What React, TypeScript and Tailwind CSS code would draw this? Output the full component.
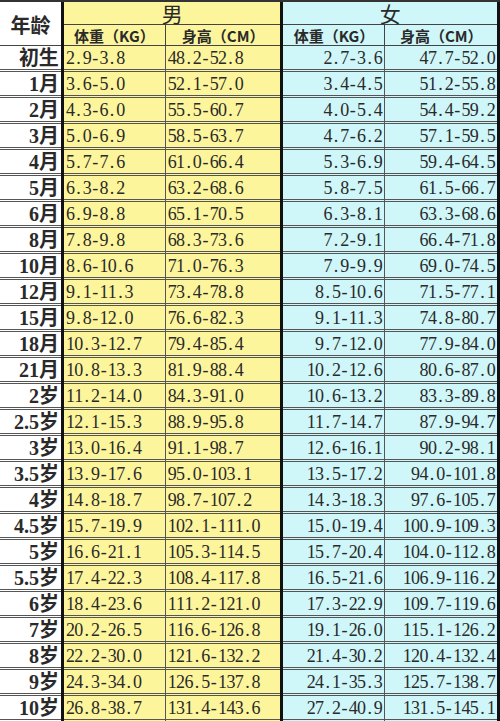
import React from "react";

const ROWS: [string, string, string, string, string][] = [
  ["初生", "2.9-3.8", "48.2-52.8", "2.7-3.6", "47.7-52.0"],
  ["1月", "3.6-5.0", "52.1-57.0", "3.4-4.5", "51.2-55.8"],
  ["2月", "4.3-6.0", "55.5-60.7", "4.0-5.4", "54.4-59.2"],
  ["3月", "5.0-6.9", "58.5-63.7", "4.7-6.2", "57.1-59.5"],
  ["4月", "5.7-7.6", "61.0-66.4", "5.3-6.9", "59.4-64.5"],
  ["5月", "6.3-8.2", "63.2-68.6", "5.8-7.5", "61.5-66.7"],
  ["6月", "6.9-8.8", "65.1-70.5", "6.3-8.1", "63.3-68.6"],
  ["8月", "7.8-9.8", "68.3-73.6", "7.2-9.1", "66.4-71.8"],
  ["10月", "8.6-10.6", "71.0-76.3", "7.9-9.9", "69.0-74.5"],
  ["12月", "9.1-11.3", "73.4-78.8", "8.5-10.6", "71.5-77.1"],
  ["15月", "9.8-12.0", "76.6-82.3", "9.1-11.3", "74.8-80.7"],
  ["18月", "10.3-12.7", "79.4-85.4", "9.7-12.0", "77.9-84.0"],
  ["21月", "10.8-13.3", "81.9-88.4", "10.2-12.6", "80.6-87.0"],
  ["2岁", "11.2-14.0", "84.3-91.0", "10.6-13.2", "83.3-89.8"],
  ["2.5岁", "12.1-15.3", "88.9-95.8", "11.7-14.7", "87.9-94.7"],
  ["3岁", "13.0-16.4", "91.1-98.7", "12.6-16.1", "90.2-98.1"],
  ["3.5岁", "13.9-17.6", "95.0-103.1", "13.5-17.2", "94.0-101.8"],
  ["4岁", "14.8-18.7", "98.7-107.2", "14.3-18.3", "97.6-105.7"],
  ["4.5岁", "15.7-19.9", "102.1-111.0", "15.0-19.4", "100.9-109.3"],
  ["5岁", "16.6-21.1", "105.3-114.5", "15.7-20.4", "104.0-112.8"],
  ["5.5岁", "17.4-22.3", "108.4-117.8", "16.5-21.6", "106.9-116.2"],
  ["6岁", "18.4-23.6", "111.2-121.0", "17.3-22.9", "109.7-119.6"],
  ["7岁", "20.2-26.5", "116.6-126.8", "19.1-26.0", "115.1-126.2"],
  ["8岁", "22.2-30.0", "121.6-132.2", "21.4-30.2", "120.4-132.4"],
  ["9岁", "24.3-34.0", "126.5-137.8", "24.1-35.3", "125.7-138.7"],
  ["10岁", "26.8-38.7", "131.4-143.6", "27.2-40.9", "131.5-145.1"],
];

// SimSun-like half-width cells: every character takes the same width
function Mono({ text }: { text: string }) {
  return (
    <span className="inline-flex">
      {text.split("").map((ch, i) => (
        <span key={i} className="inline-block w-[8.4px] text-center">
          {ch}
        </span>
      ))}
    </span>
  );
}

const serif = "font-['Liberation_Serif','Noto_Sans_CJK_SC',serif]";
const cjk = "font-['Noto_Sans_CJK_SC','Liberation_Sans',sans-serif]";

function SubHeader() {
  return (
    <div className="flex flex-1 border-b border-[#444]">
      <div className={`w-[102px] flex items-center justify-center border-r border-[#444] text-[15px] font-bold leading-none ${cjk}`}>
        体重（KG）
      </div>
      <div className={`flex-1 flex items-center justify-center text-[15px] font-bold leading-none ${cjk}`}>
        身高（CM）
      </div>
    </div>
  );
}

export default function App() {
  return (
    <div className="w-[500px] h-[721px] overflow-hidden bg-white text-[#2a2a2a]">
      {/* Header */}
      <div className="flex border-t-2 border-[#333] h-[46px]">
        <div
          className={`w-[61px] flex items-center justify-center pt-[2px] border-b border-[#444] text-[20px] font-bold leading-none ${cjk}`}
        >
          年龄
        </div>
        <div className="w-[3px] bg-[#111]" />
        <div className="w-[217px] flex flex-col bg-[#fdf59c]">
          <div className={`h-[23px] flex items-center justify-center border-b border-[#444] text-[21px] leading-[21px] ${cjk}`}>
            男
          </div>
          <SubHeader />
        </div>
        <div className="w-[3px] bg-[#111]" />
        <div className="w-[214px] flex flex-col bg-[#cff6f8]">
          <div className={`h-[23px] flex items-center justify-center border-b border-[#444] text-[21px] leading-[21px] ${cjk}`}>
            女
          </div>
          <SubHeader />
        </div>
        <div className="w-[3px] bg-[#111]" />
      </div>

      {/* Data rows */}
      {ROWS.map(([age, mw, mh, fw, fh]) => (
        <div key={age} className="flex h-[26px]">
          <div
            className={`w-[61px] flex items-center justify-end pr-[2px] border-b-[3px] border-double border-[#555] text-[20px] font-bold leading-none ${serif}`}
          >
            {age}
          </div>
          <div className="w-[3px] bg-[#111]" />
          <div
            className={`w-[102px] flex items-center pl-[2px] bg-[#fdf59c] border-r border-b-[3px] border-double border-[#555] text-[18px] leading-none ${serif}`}
          >
            <Mono text={mw} />
          </div>
          <div
            className={`w-[115px] flex items-center pl-[2px] bg-[#fdf59c] border-b-[3px] border-double border-[#555] text-[18px] leading-none ${serif}`}
          >
            <Mono text={mh} />
          </div>
          <div className="w-[3px] bg-[#111]" />
          <div
            className={`w-[102px] flex items-center justify-end pr-[2px] bg-[#cff6f8] border-r border-b-[3px] border-double border-[#555] text-[18px] leading-none ${serif}`}
          >
            <Mono text={fw} />
          </div>
          <div
            className={`w-[112px] flex items-center justify-end pr-[2px] bg-[#cff6f8] border-b-[3px] border-double border-[#555] text-[18px] leading-none ${serif}`}
          >
            <Mono text={fh} />
          </div>
          <div className="w-[3px] bg-[#111]" />
        </div>
      ))}
    </div>
  );
}
